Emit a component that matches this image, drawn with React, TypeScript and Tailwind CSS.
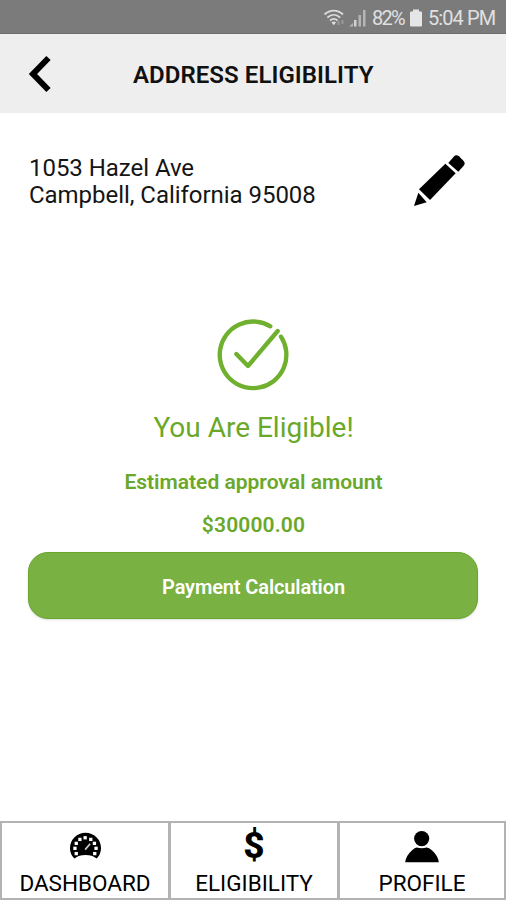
import type { ReactNode } from "react";

function WifiIcon() {
  return (
    <svg viewBox="0 0 24 18" className="w-[24px] h-[18px]" fill="none" stroke="#dcdcdc" strokeWidth="1.8">
      <path d="M1.5 5.5C7 0.3 14.500 0.300 20 5.500" />
      <path d="M4.300 8.600C8.200 5 13.300 5 17.200 8.600" />
      <path d="M7 11.500C9.300 9.500 12.200 9.500 14.500 11.500" />
      <path d="M8.500 13.400L10.750 16.200L13 13.400C11.700 12.300 9.800 12.300 8.500 13.400Z" fill="#dcdcdc" stroke="none" />
      <path d="M15.500 12V16M19.500 11V15" stroke="#999" strokeWidth="2" />
    </svg>
  );
}

function SignalIcon() {
  return (
    <svg viewBox="0 0 18 18" className="w-[18px] h-[18px]" fill="#d2d2d2">
      <path d="M0 17.500L4 14V17.500Z" fill="#b5b5b5" />
      <rect x="5" y="11" width="2.500" height="6.500" />
      <rect x="9.500" y="6" width="2.500" height="11.500" fill="#b5b5b5" />
      <rect x="14" y="1" width="2.500" height="16.500" fill="#b5b5b5" />
    </svg>
  );
}

function BatteryIcon() {
  return (
    <svg viewBox="0 0 12 18" className="w-[12px] h-[18px]" fill="#e6e6e6">
      <path d="M3 0.500h6v2h2q1 0 1 1V16.500q0 1-1 1H1q-1 0-1-1V3.500q0-1 1-1h2z" />
    </svg>
  );
}

function PencilIcon() {
  return (
    <svg viewBox="42 42 156 156" className="w-[52px] h-[52px]">
      <path d="M42 198L55 158L80 187Z" />
      <path d="M57 148L136 71L167 100L90 180Z" />
      <path d="M145 69L161 50Q169 42 177 49L191 63Q197 70 191 77L175 95Z" />
    </svg>
  );
}

function CheckIcon() {
  return (
    <svg viewBox="50 50 222 222" className="w-[74px] h-[74px]" fill="none" stroke="#6fb02f" strokeWidth="13" strokeLinecap="round">
      <path d="M213 78A100 100 0 1 0 245 109" />
      <path d="M111 161L146 197L235 92" strokeLinejoin="round" />
    </svg>
  );
}

// white squares along the dial of the gauge
const ticks = [
  [227, 129], [223, 113], [227, 98], [238, 86], [254, 81],
  [271, 86], [282, 98], [287, 113], [283, 129],
];

function GaugeIcon() {
  return (
    <svg viewBox="205 64 100 84" className="w-[33px] h-[28px]">
      <path d="M221 144Q208 131 208 113A47 47 0 0 1 302 113Q302 131 289 144L276 136Q255 130 234 136Z" />
      {ticks.map(([x, y]) => (
        <rect key={`${x}-${y}`} x={x - 5} y={y - 5} width="10" height="10" fill="#fff" />
      ))}
      <path d="M254 117L269 99" stroke="#ccc" strokeWidth="5" />
    </svg>
  );
}

function ProfileIcon() {
  return (
    <svg viewBox="236 56 108 100" className="w-[36px] h-[33px]">
      <circle cx="289" cy="82" r="23" />
      <path d="M239 154Q240 135 260 117Q268 109 274 109Q289 114 304 109Q311 109 320 117Q340 135 341 154Z" />
    </svg>
  );
}

const tabs: { label: string; icon: ReactNode; className: string }[] = [
  { label: "DASHBOARD", icon: <GaugeIcon />, className: "w-[171px] border-l-2 border-r-[3px]" },
  {
    label: "ELIGIBILITY",
    icon: <span className="font-extrabold text-[37px] leading-[36px]">$</span>,
    className: "w-[169px] border-r-[3px]",
  },
  { label: "PROFILE", icon: <ProfileIcon />, className: "w-[166px] border-r-2" },
];

export default function App() {
  return (
    <div className="flex h-[900px] w-[506px] flex-col overflow-hidden bg-white font-[Roboto,sans-serif] text-black">
      {/* Status bar */}
      <div className="flex h-[34px] shrink-0 items-center border-b border-[#6e6e6e] bg-[#7b7b7b] pl-[323px] pt-[2px] text-[20px] text-[#e0e0e0]">
        <WifiIcon />
        <div className="ml-[2px]"><SignalIcon /></div>
        <span className="ml-[5px] w-[35px] whitespace-nowrap pt-px tracking-[-1.7px]">82%</span>
        <div className="ml-[3px]"><BatteryIcon /></div>
        <span className="ml-[6px] whitespace-nowrap pt-px tracking-[-0.9px]">5:04 PM</span>
      </div>

      {/* Header */}
      <header className="flex h-[79px] shrink-0 items-center bg-[#eeeeee] pl-[28px]">
        <svg viewBox="0 0 24 38" className="h-[38px] w-[24px]" fill="none" stroke="#000" strokeWidth="6">
          <path d="M20.500 3L5 19L20.500 35" />
        </svg>
        <h1 className="ml-[81px] pt-[2px] text-[24px] font-semibold tracking-[0.06px] text-[#111]">ADDRESS ELIGIBILITY</h1>
      </header>

      {/* Address */}
      <div className="flex h-[204px] shrink-0 items-start justify-between pl-[29px] pr-[40px] pt-[41px]">
        <p className="pt-px text-[24px] leading-[27px] tracking-[-0.04px] text-[#151515]">
          1053 Hazel Ave
          <br />
          Campbell, California 95008
        </p>
        <PencilIcon />
      </div>

      {/* Result */}
      <main className="flex flex-1 flex-col items-center text-[#6aa829]">
        <CheckIcon />
        <p className="mt-[17px] pl-px text-[28px] leading-[40px]">You Are Eligible!</p>
        <p className="mt-[19px] pl-px text-[21px] font-semibold leading-[30px]">Estimated approval amount</p>
        <p className="mt-[13px] pl-px text-[21px] font-semibold leading-[30px] tracking-[0.15px]">$30000.00</p>
        <button className="mt-[12px] h-[67px] w-[450px] rounded-[20px] border border-[#6aa52c] bg-[#79b142] pl-px pt-[2px] text-[20px] font-semibold tracking-[-0.12px] text-white shadow-sm">
          Payment Calculation
        </button>
      </main>

      {/* Bottom tabs */}
      <nav className="flex h-[79px] shrink-0">
        {tabs.map((tab) => (
          <div key={tab.label} className={`flex flex-col items-center border-y-2 border-[#b3b3b3] pt-[4px] ${tab.className}`}>
            <div className="flex h-[38px] shrink-0 items-center">{tab.icon}</div>
            <span className="pt-px text-[22.500px] leading-[34px]">{tab.label}</span>
          </div>
        ))}
      </nav>
    </div>
  );
}
